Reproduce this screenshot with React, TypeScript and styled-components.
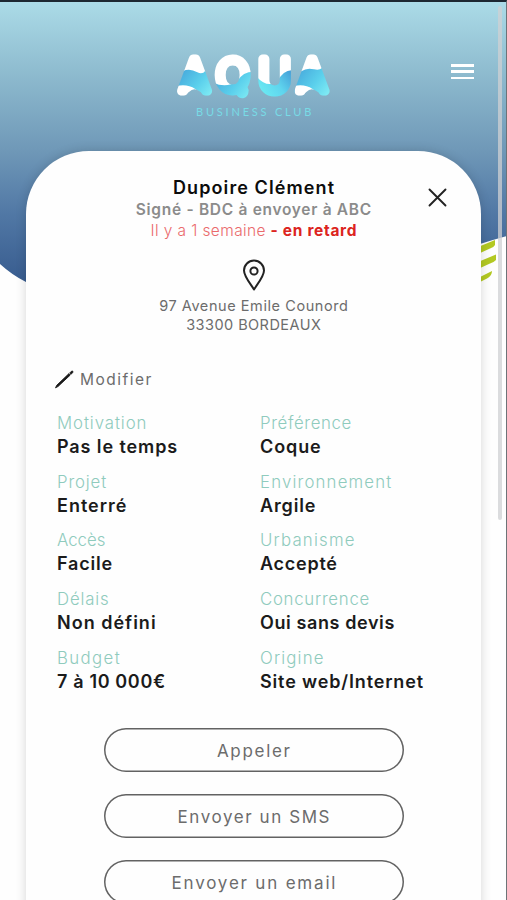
import React from "react";
import styled, { createGlobalStyle } from "styled-components";

const GlobalStyle = createGlobalStyle`
  * { box-sizing: border-box; }
  body { margin: 0; background: #fefefe; }
`;

const Screen = styled.div`
  position: relative;
  isolation: isolate;
  height: 900px;
  overflow: hidden;
  border-top: 2px solid #1c2731;
  border-right: 1px solid #6d7377;
  background: #fefefe;
  font-family: Inter, sans-serif;
`;

const Backdrop = styled.svg`
  position: absolute;
  z-index: -1;
  top: 0;
  left: 0;
  width: 507px;
  height: 300px;
`;

const Header = styled.header`
  display: grid;
  grid-template-columns: 160px 190px 1fr;
  height: 149px;
  padding-top: 38px;
`;

const Logo = styled.svg`
  grid-column: 2;
  width: 190px;
  height: 90px;
`;

const MenuButton = styled.button`
  display: flex;
  flex-direction: column;
  justify-content: space-between;
  justify-self: end;
  width: 23px;
  height: 15px;
  margin: 24px 32px 0 0;
  padding: 0;
  border: 0;
  background: none;
`;

const MenuLine = styled.span`
  height: 2.5px;
  background: #fff;
`;

const Card = styled.main`
  position: relative;
  width: 455px;
  height: 830px;
  margin-left: 26px;
  padding: 26px 31px 0;
  border-radius: 63px 63px 0 0;
  background: #fefefe;
  box-shadow: 0 0 11px rgba(0, 0, 0, 0.16);
`;

const CloseButton = styled.button`
  position: absolute;
  top: 37px;
  right: 34px;
  display: flex;
  padding: 0;
  border: 0;
  background: none;
`;

const Text = styled.span<{ $ls: number }>`
  margin-right: ${(p) => -p.$ls}px;
  letter-spacing: ${(p) => p.$ls}px;
  white-space: nowrap;
`;

const Centered = styled.section`
  display: flex;
  flex-direction: column;
  align-items: center;
`;

const Name = styled.h1`
  margin: 0;
  color: #0c0c0c;
  font-size: 18px;
  font-weight: 600;
  line-height: 22px;
`;

const Status = styled.div`
  color: #8b8b8b;
  font-size: 15.5px;
  font-weight: 600;
  line-height: 22px;
`;

const Delay = styled.div`
  display: flex;
  gap: 5px;
  color: #ea6a6c;
  font-size: 15.5px;
  font-weight: 300;
  line-height: 20px;
`;

const Late = styled(Text)`
  color: #dc2420;
  font-weight: 700;
`;

const Pin = styled.svg`
  margin: 18px 0 5px;
`;

const AddressLine = styled.div`
  color: #6c6c6c;
  font-size: 14.5px;
  line-height: 19px;
`;

const EditButton = styled.button`
  display: flex;
  align-items: center;
  gap: 6px;
  height: 24px;
  margin: 33px 0 20px -3px;
  padding: 0;
  border: 0;
  background: none;
  color: #6c6c6c;
  font: 400 15.5px Inter, sans-serif;
`;

const Fields = styled.dl`
  display: grid;
  grid-template-columns: 203px 1fr;
  row-gap: 10.7px;
  margin: 0;
`;

const Field = styled.div`
  line-height: 24px;
`;

const Label = styled.dt`
  color: #8fcbbd;
  font-size: 16.8px;
  font-weight: 300;
`;

const Value = styled.dd`
  margin: 0;
  color: #1b1b1b;
  font-size: 18px;
  font-weight: 600;
`;

const Actions = styled.div`
  display: flex;
  flex-direction: column;
  align-items: center;
  gap: 22px;
  margin-top: 34px;
`;

const ActionButton = styled.button`
  width: 300px;
  height: 44px;
  padding: 2px 0 0;
  border: 0;
  border-radius: 22px;
  background: none;
  box-shadow: inset 0 0 0 1.5px #626262;
  color: #6c6c6c;
  font: 400 17px Inter, sans-serif;
`;

const ScrollThumb = styled.div`
  position: absolute;
  top: 4px;
  right: 4px;
  width: 4px;
  height: 514px;
  border-radius: 2px;
  background: rgba(207, 208, 211, 0.75);
`;

type Entry = [label: string, labelSpacing: number, value: string, valueSpacing: number];

const entries: Entry[] = [
  ["Motivation", 0.92, "Pas le temps", 0.9],
  ["Préférence", 0.64, "Coque", 0.9],
  ["Projet", 0.85, "Enterré", 1],
  ["Environnement", 1.17, "Argile", 0.85],
  ["Accès", 0, "Facile", 0.8],
  ["Urbanisme", 1.2, "Accepté", 0.75],
  ["Délais", 0.85, "Non défini", 1],
  ["Concurrence", 0.73, "Oui sans devis", 0.6],
  ["Budget", 1.4, "7 à 10 000€", 0.65],
  ["Origine", 1.15, "Site web/Internet", 0.85],
];

const actions: [string, number][] = [
  ["Appeler", 1.7],
  ["Envoyer un SMS", 1.58],
  ["Envoyer un email", 1.8],
];

function AquaLogo() {
  return (
    <Logo viewBox="0 0 570 270" role="img" aria-label="Aqua Business Club">
      <defs>
        <linearGradient id="water" x1="0" x2="1" y1="0.2" y2="0.8">
          <stop offset="0" stopColor="#47a9dc" />
          <stop offset="0.5" stopColor="#5bd0ec" />
          <stop offset="1" stopColor="#8af3f6" />
        </linearGradient>
        <linearGradient id="waterReverse" x1="0" x2="1" y1="0.8" y2="0.2">
          <stop offset="0" stopColor="#6eeff4" />
          <stop offset="0.55" stopColor="#5fd5ee" />
          <stop offset="1" stopColor="#459fd8" />
        </linearGradient>
        <mask id="letters" maskUnits="userSpaceOnUse" x="0" y="0" width="570" height="200">
          <g fill="#fff" stroke="#fff" strokeWidth="27" strokeLinejoin="round" fontFamily="Inter" fontWeight="200" fontSize="131">
            <text x="61" y="154">A</text>
            <text x="169" y="154">O</text>
            <text x="296" y="154">U</text>
            <text x="413" y="154">A</text>
          </g>
          <path d="M105 72L68 158Q78 164 87 156Q102 140 118 154Q130 164 146 166ZM457 72L420 158Q430 164 439 156Q454 140 470 154Q482 164 498 166Z" fill="#fff" />
          <path d="M225 158Q236 178 252 174Q266 170 266 150L262 140Z" fill="#fff" />
        </mask>
      </defs>
      <g mask="url(#letters)">
        <rect width="570" height="200" fill="#fff" />
        <path d="M50 106Q80 78 112 97Q128 104 136 92L175 180L135 180Q104 126 50 138Z" fill="url(#water)" />
        <path d="M160 128Q198 145 232 124Q250 92 290 96L290 190L225 190Q180 160 160 150Z" fill="url(#water)" />
        <path d="M290 110Q322 146 352 124Q374 84 404 92L404 180L290 180Z" fill="url(#waterReverse)" />
        <path d="M402 116Q428 78 462 88Q478 92 486 84L525 180L487 180Q456 126 402 138Z" fill="url(#water)" />
      </g>
      <text x="108" y="227" fill="#78dbe6" fontFamily="Lato" fontSize="33" letterSpacing="8.4">BUSINESS CLUB</text>
    </Logo>
  );
}

export default function App() {
  return (
    <Screen>
      <GlobalStyle />
      <Backdrop viewBox="0 2 507 300" aria-hidden="true">
        <defs>
          <linearGradient id="sky" x1="0" x2="0" y1="2" y2="284" gradientUnits="userSpaceOnUse">
            <stop offset="0" stopColor="#abdbe7" />
            <stop offset="0.26" stopColor="#8dbace" />
            <stop offset="0.52" stopColor="#7099b8" />
            <stop offset="0.75" stopColor="#5178a5" />
            <stop offset="1" stopColor="#375b8e" />
          </linearGradient>
        </defs>
        <path d="M0 0H507V236Q470 246 430 262Q250 350 100 306Q45 295 26 282Q12 275 0 264Z" fill="url(#sky)" />
        <path d="M478 247L495 240V245Q494 247 490 248.500L478 254Z M478 262L496 254.500V260Q494 262 490 263.500L478 269Z M478 278L492 271Q492 276 487 278.500L478 283Z" fill="#b3c922" />
      </Backdrop>
      <Header>
        <AquaLogo />
        <MenuButton aria-label="Menu">
          <MenuLine />
          <MenuLine />
          <MenuLine />
        </MenuButton>
      </Header>
      <Card>
        <CloseButton aria-label="Fermer">
          <svg width="19" height="19" viewBox="0 0 19 19" fill="none" stroke="#222" strokeWidth="1.9" strokeLinecap="round">
            <path d="M1.500 1.500L17.500 17.500M17.500 1.500L1.500 17.500" />
          </svg>
        </CloseButton>
        <Centered>
          <Name><Text $ls={1.1}>Dupoire Clément</Text></Name>
          <Status><Text $ls={0.7}>Signé - BDC à envoyer à ABC</Text></Status>
          <Delay>
            <Text $ls={0.4}>Il y a 1 semaine</Text>
            <Late $ls={0.68}>- en retard</Late>
          </Delay>
          <Pin width="24" height="32" viewBox="0 0 24 32" fill="none" stroke="#222" strokeWidth="2">
            <path d="M12 30.500C9 25.500 2 17.500 2 11.500A10 10 0 0 1 22 11.500C22 17.500 15 25.500 12 30.500Z" strokeLinejoin="round" />
            <circle cx="12" cy="12" r="3.600" />
          </Pin>
          <AddressLine><Text $ls={0.57}>97 Avenue Emile Counord</Text></AddressLine>
          <AddressLine><Text $ls={0.45}>33300 BORDEAUX</Text></AddressLine>
        </Centered>
        <EditButton>
          <svg width="20" height="20" viewBox="0 0 20 20">
            <path d="M1.500 18.800L2.800 16.200L15 4.600L16.300 6L4 17.500Z M15.800 3.900L17.400 2.300Q18.300 1.700 18.800 2.300Q19.300 2.900 18.600 3.700L17 5.300Z" fill="#191919" stroke="#191919" strokeWidth="0.900" strokeLinejoin="round" />
          </svg>
          <Text $ls={1.5}>Modifier</Text>
        </EditButton>
        <Fields>
          {entries.map(([label, labelSpacing, value, valueSpacing]) => (
            <Field key={label}>
              <Label><Text $ls={labelSpacing}>{label}</Text></Label>
              <Value><Text $ls={valueSpacing}>{value}</Text></Value>
            </Field>
          ))}
        </Fields>
        <Actions>
          {actions.map(([label, spacing]) => (
            <ActionButton key={label}><Text $ls={spacing}>{label}</Text></ActionButton>
          ))}
        </Actions>
      </Card>
      <ScrollThumb />
    </Screen>
  );
}
